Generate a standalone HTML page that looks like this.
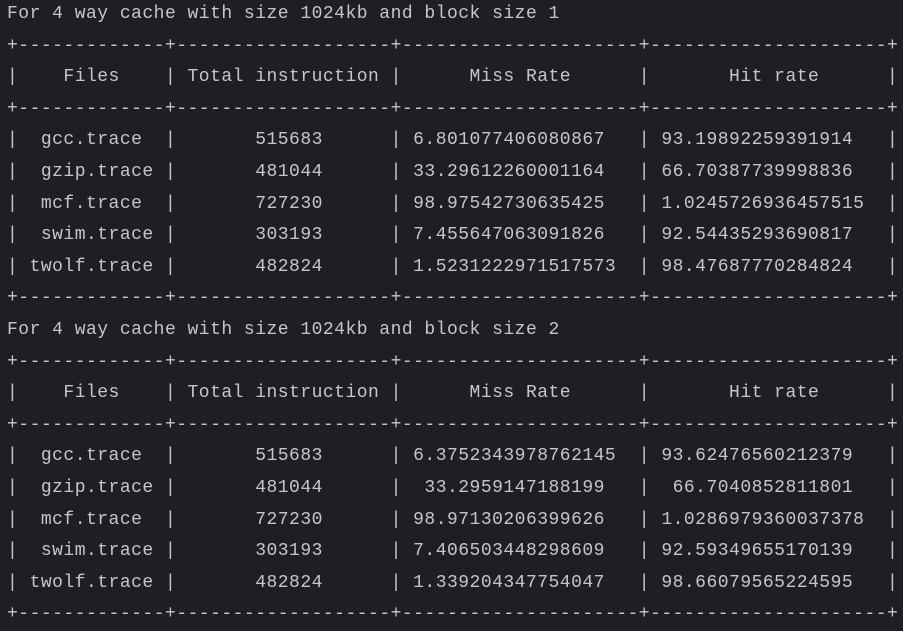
<!DOCTYPE html>
<html><head><meta charset="utf-8"><style>
html,body{margin:0;padding:0;background:#1e1f22;width:903px;height:626px;overflow:hidden}
pre{margin:0;position:absolute;left:7px;top:-1px;font-family:"Liberation Mono","DejaVu Sans Mono",monospace;font-size:18px;letter-spacing:0.48px;line-height:31.6px;color:#c4c6cc;white-space:pre}
</style></head><body><pre>For 4 way cache with size 1024kb and block size 1
+-------------+-------------------+---------------------+---------------------+
|    Files    | Total instruction |      Miss Rate      |       Hit rate      |
+-------------+-------------------+---------------------+---------------------+
|  gcc.trace  |       515683      | 6.801077406080867   | 93.19892259391914   |
|  gzip.trace |       481044      | 33.29612260001164   | 66.70387739998836   |
|  mcf.trace  |       727230      | 98.97542730635425   | 1.0245726936457515  |
|  swim.trace |       303193      | 7.455647063091826   | 92.54435293690817   |
| twolf.trace |       482824      | 1.5231222971517573  | 98.47687770284824   |
+-------------+-------------------+---------------------+---------------------+
For 4 way cache with size 1024kb and block size 2
+-------------+-------------------+---------------------+---------------------+
|    Files    | Total instruction |      Miss Rate      |       Hit rate      |
+-------------+-------------------+---------------------+---------------------+
|  gcc.trace  |       515683      | 6.3752343978762145  | 93.62476560212379   |
|  gzip.trace |       481044      |  33.2959147188199   |  66.7040852811801   |
|  mcf.trace  |       727230      | 98.97130206399626   | 1.0286979360037378  |
|  swim.trace |       303193      | 7.406503448298609   | 92.59349655170139   |
| twolf.trace |       482824      | 1.339204347754047   | 98.66079565224595   |
+-------------+-------------------+---------------------+---------------------+</pre></body></html>
